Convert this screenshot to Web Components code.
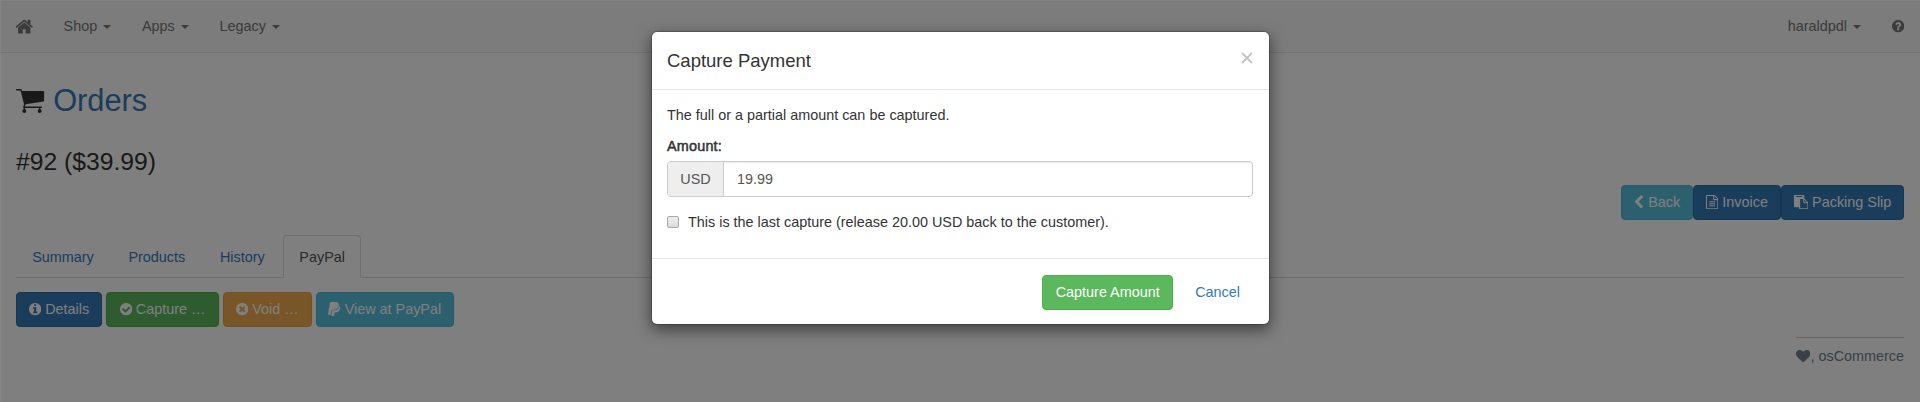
<!DOCTYPE html>
<html lang="en">
<head>
<meta charset="utf-8">
<title>Orders</title>
<style>
html,body{margin:0;height:100%;overflow:hidden;background:#fff}
body{font-family:"Liberation Sans",Arial,sans-serif;font-size:14.4px;line-height:20.6px;color:#333}
</style>
</head>
<body>
<admin-page></admin-page>
<script>
const DISC='q0 209-103 385.5t-279.5 279.5-385.5 103-385.5-103-279.5-279.5-103-385.5 103-385.5 279.5-279.5 385.5-103 385.5 103 279.5 279.5 103 385.5z';
const ICONS={
home:[64,1664,'M1408 992v480q0 26-19 45t-45 19h-384v-384h-256v384h-384q-26 0-45-19t-19-45v-480q0-1 .5-3t.5-3l575-474 575 474q1 2 1 6zm223-69l-62 74q-8 9-21 11h-3q-13 0-21-7l-692-577-692 577q-12 8-24 7-13-2-21-11l-62-74q-8-10-7-23.5t11-21.5l719-599q32-26 76-26t76 26l244 204v-195q0-14 9-23t23-9h192q14 0 23 9t9 23v408l219 182q10 8 11 21.5t-7 23.5z'],
cart:[0,1664,'M40 233H290Q320 233 330 260L352 349H1600Q1635 349 1635 384V920Q1635 950 1600 956L560 1125 520 1250H1480Q1520 1250 1520 1295T1480 1340H440Q400 1340 415 1300L470 1120 265 315H40Q0 315 0 274T40 233zM600 1513a115 115 0 1 1-230 0 115 115 0 1 1 230 0zM1492 1513a115 115 0 1 1-230 0 115 115 0 1 1 230 0zM450 1320h70v100h-70zM1342 1320h70v100h-70z'],
info:[128,1536,'M1152 1376v-160q0-14-9-23t-23-9h-96v-512q0-14-9-23t-23-9h-320q-14 0-23 9t-9 23v160q0 14 9 23t23 9h96v320h-96q-14 0-23 9t-9 23v160q0 14 9 23t23 9h448q14 0 23-9t9-23zm-128-896v-160q0-14-9-23t-23-9h-192q-14 0-23 9t-9 23v160q0 14 9 23t23 9h192q14 0 23-9t9-23zm640 416'+DISC],
check:[128,1536,'M1412 734q0-28-18-46l-91-90q-19-19-45-19t-45 19l-408 407-226-226q-19-19-45-19t-45 19l-91 90q-18 18-18 46 0 27 18 45l362 362q19 19 45 19 27 0 46-19l543-543q18-18 18-45zm252 162'+DISC],
times:[128,1536,'M1277 1122q0-26-19-45l-181-181 181-181q19-19 19-45 0-27-19-46l-90-90q-19-19-46-19-26 0-45 19l-181 181-181-181q-19-19-45-19-27 0-46 19l-90 90q-19 19-19 46 0 26 19 45l181 181-181 181q-19 19-19 45 0 27 19 46l90 90q19 19 46 19 26 0 45-19l181-181 181 181q19 19 45 19 27 0 46-19l90-90q19-19 19-46zm387-226'+DISC],
question:[128,1536,'M1024 1376v-192q0-14-9-23t-23-9h-192q-14 0-23 9t-9 23v192q0 14 9 23t23 9h192q14 0 23-9t9-23zm256-672q0-88-55.5-163t-138.5-116-170-41q-243 0-371 213-15 24 8 42l132 100q7 6 19 6 16 0 25-12 53-68 86-92 34-24 86-24 48 0 85.5 26t37.5 59q0 38-20 61t-68 45q-63 28-115.5 86.5t-52.5 125.5v36q0 14 9 23t23 9h192q14 0 23-9t9-23q0-19 21.5-49.5t54.5-49.5q32-18 49-28.5t46-35 44.5-48 28-60.5 12.5-81zm384 192'+DISC],
heart:[0,1792,'M896 1664q-26 0-44-18l-624-602q-10-8-27.5-26t-55.5-65.5-68-97.5-53.5-121-23.5-138q0-220 127-344t351-124q62 0 126.5 21.5t120 58 95.5 68.5 76 68q36-36 76-68t95.5-68.5 120-58 126.5-21.5q224 0 351 124t127 344q0 221-229 450l-623 600q-18 18-44 18z'],
left:[330,1280,'M1427 301l-531 531 531 531q19 19 19 45t-19 45l-166 166q-19 19-45 19t-45-19l-742-742q-19-19-19-45t19-45l742-742q19-19 45-19t45 19l166 166q19 19 19 45t-19 45z'],
file:[128,1536,'M1596 380q28 28 48 76t20 88v1152q0 40-28 68t-68 28h-1344q-40 0-68-28t-28-68v-1600q0-40 28-68t68-28h896q40 0 88 20t76 48zm-444-244v376h376q-10-29-22-41l-313-313q-12-12-41-22zm384 1528v-1024h-416q-40 0-68-28t-28-68v-416h-768v1536h1280zm-1024-864q0-14 9-23t23-9h704q14 0 23 9t9 23v64q0 14-9 23t-23 9h-704q-14 0-23-9t-9-23v-64zm736 224q14 0 23 9t9 23v64q0 14-9 23t-23 9h-704q-14 0-23-9t-9-23v-64q0-14 9-23t23-9h704zm0 256q14 0 23 9t9 23v64q0 14-9 23t-23 9h-704q-14 0-23-9t-9-23v-64q0-14 9-23t23-9h704z'],
paste:[0,1792,'M768 1664h896v-640h-416q-40 0-68-28t-28-68v-416h-384v1152zm256-1440v-64q0-13-9.5-22.5t-22.5-9.5h-704q-13 0-22.5 9.5t-9.5 22.5v64q0 13 9.5 22.5t22.5 9.5h704q13 0 22.5-9.5t9.5-22.5zm256 672h299l-299-299v299zm512 128v672q0 40-28 68t-68 28h-960q-40 0-68-28t-28-68v-160h-544q-40 0-68-28t-28-68v-1344q0-40 28-68t68-28h1088q40 0 68 28t28 68v328q21 13 36 28l408 408q28 28 48 76t20 88z'],
paypal:[128,1536,'M1647 646q18 84-4 204-87 444-565 444h-44q-25 0-44 16.5t-24 42.5l-4 19-55 346-2 15q-5 26-24.5 42.5t-44.5 16.5h-251q-21 0-33-15t-9-36q9-56 26.5-168t26.5-168 27-167.5 27-167.5q5-37 43-37h131q133 2 236-21 175-39 287-144 102-95 155-246 24-70 35-133 1-6 2.5-7.5t3.5-1 6 3.5q79 59 98 162zm-172-282q0 107-46 236-80 233-302 315-113 40-252 42 0 1-90 1l-90-1q-100 0-118 96-2 8-85 530-1 10-12 10h-295q-22 0-36.5-16.5t-11.5-38.5l232-1471q5-29 27.5-48t51.5-19h598q34 0 97.5 13t111.5 32q107 41 163.5 123t56.5 196z']
};
function define(name,render){
  customElements.define(name,class extends HTMLElement{
    connectedCallback(){
      if(this.shadowRoot)return;
      const t=document.createElement('template');
      t.innerHTML=render(this);
      this.attachShadow({mode:'open'}).append(t.content.cloneNode(true));
    }
  });
}
define('fa-icon',el=>{
  const [x,w,d]=ICONS[el.getAttribute('name')];
  return `<style>:host{display:inline-block;line-height:0;white-space:normal;vertical-align:-.143em}svg{display:block;height:1em;width:${w/1792}em;fill:currentColor}</style><svg viewBox="${x} 0 ${w} 1792"><path d="${d}"/></svg>`;
});
define('nav-link',el=>`<style>
:host{display:flex;align-items:center;padding:0 15.4px;height:51px;color:#777;white-space:nowrap}
i{width:0;height:0;margin-left:6px;border:4.1px solid transparent;border-top-color:currentColor;border-bottom:0;margin-top:1px}
</style><slot></slot>${el.hasAttribute('menu')?'<i></i>':''}`);
define('nav-bar',()=>`<style>
:host{display:flex;justify-content:space-between;height:53px;background:#f8f8f8;border-bottom:1px solid #e7e7e7;box-sizing:border-box;padding:1px .5px 0 .6px}
div{display:flex}
.home{font-size:19.2px;margin-right:-1px}
</style>
<div><nav-link><fa-icon class="home" name="home"></fa-icon></nav-link><nav-link menu>Shop</nav-link><nav-link menu>Apps</nav-link><nav-link menu>Legacy</nav-link></div>
<div><nav-link menu>haraldpdl</nav-link><nav-link><fa-icon name="question"></fa-icon></nav-link></div>`);
define('ui-button',()=>`<style>
:host{display:block;box-sizing:border-box;height:35px;padding:6.2px 0;border:1px solid #2e6da4;border-radius:4px;background:#337ab7;color:#fff;text-align:center;white-space:nowrap}
:host([kind=success]){background:#5cb85c;border-color:#4cae4c}
:host([kind=warning]){background:#f0ad4e;border-color:#eea236}
:host([kind=info]){background:#5bc0de;border-color:#46b8da}
:host([kind=link]){background:none;border-color:transparent;color:#337ab7;padding:6.2px 12px}
</style><slot></slot>`);
define('tab-item',()=>`<style>
:host{display:block;box-sizing:border-box;height:43px;margin-bottom:-1px;padding:11.3px 15.3px 0 15.2px;border:1px solid transparent;border-radius:4px 4px 0 0;color:#337ab7;margin-right:2.2px}
:host([active]){color:#555;border-color:#ddd #ddd #fff;background:#fff;padding-right:14.6px}
</style><slot></slot>`);
define('order-view',()=>`<style>
:host{display:flex;flex-direction:column;padding:0 16px 0 16px}
h1,h2{margin:0;font-weight:400}
h1{font-size:30.8px;line-height:34px;height:34px;margin-top:31px;color:#337ab7;white-space:nowrap}
h1 fa-icon{color:#333}
h2{font-size:24.7px;line-height:28px;margin-top:30px;color:#333}
.actions{display:flex;justify-content:flex-end;margin-top:9px}
.tabs{display:flex;border-bottom:1px solid #ddd;margin-top:15px}
.buttons{display:flex;gap:4px;margin-top:14px}
footer{align-self:flex-end;margin-top:10px;padding-top:8px;border-top:1px solid #ccc;color:#708090;white-space:nowrap}
</style>
<h1><fa-icon name="cart"></fa-icon> Orders</h1>
<h2>#92 ($39.99)</h2>
<div class="actions"><ui-button kind="info" style="width:72px"><fa-icon name="left"></fa-icon> Back</ui-button><ui-button style="width:88px"><fa-icon name="file"></fa-icon> Invoice</ui-button><ui-button style="width:123px"><fa-icon name="paste"></fa-icon> Packing Slip</ui-button></div>
<div class="tabs"><tab-item>Summary</tab-item><tab-item>Products</tab-item><tab-item>History</tab-item><tab-item active>PayPal</tab-item></div>
<div class="buttons"><ui-button style="width:86px"><fa-icon name="info"></fa-icon> Details</ui-button><ui-button kind="success" style="width:113px"><fa-icon name="check"></fa-icon> Capture …</ui-button><ui-button kind="warning" style="width:88.5px"><fa-icon name="times"></fa-icon> Void …</ui-button><ui-button kind="info" style="width:138.5px"><fa-icon name="paypal"></fa-icon> View at PayPal</ui-button></div>
<footer><fa-icon name="heart"></fa-icon>, osCommerce</footer>`);
define('amount-field',()=>`<style>
:host{display:flex;box-sizing:border-box;height:36px;border:1px solid #ccc;border-radius:4px;overflow:hidden;color:#555;line-height:34px;box-shadow:inset 0 1px 1px rgba(0,0,0,.075)}
.unit{width:55px;text-align:center;background:#eee;border-right:1px solid #ccc}
.value{padding-left:13px}
</style><div class="unit">USD</div><div class="value"><slot></slot></div>`);
define('capture-dialog',()=>`<style>
:host{display:block;box-sizing:border-box;width:619px;height:294px;background:#fff;background-clip:padding-box;border:1px solid rgba(0,0,0,.2);border-radius:6px;box-shadow:0 5px 15px rgba(0,0,0,.5);color:#333}
header{display:flex;justify-content:space-between;height:58px;box-sizing:border-box;border-bottom:1px solid #e5e5e5;padding:16px 16px 0 15px;font-size:18.5px;line-height:26px}
header svg{width:12px;height:12px;margin-top:4px;stroke:#c4c4c4;stroke-width:1.9}
main{padding:15px 16px 15px 15px;height:169px;box-sizing:border-box;border-bottom:1px solid #e5e5e5}
p{margin:0 0 10px}
.label{font-weight:400;-webkit-text-stroke:.5px #333;letter-spacing:.2px;margin-bottom:5px}
.check{display:flex;align-items:center;margin-top:15px;gap:9px}
.box{width:12px;height:12px;box-sizing:border-box;border:1px solid #a8a8a8;border-radius:2px;background:linear-gradient(#eee,#dcdcdc)}
footer{display:flex;justify-content:flex-end;padding:15.6px 16px 0;gap:9px}
</style>
<header><span>Capture Payment</span><svg viewBox="0 0 12 12"><path d="M1 1L11 11M11 1L1 11"/></svg></header>
<main><p>The full or a partial amount can be captured.</p><div class="label">Amount:</div>
<amount-field>19.99</amount-field>
<div class="check"><span class="box"></span><span>This is the last capture (release 20.00 USD back to the customer).</span></div></main>
<footer><ui-button kind="success" style="width:131px">Capture Amount</ui-button><ui-button kind="link">Cancel</ui-button></footer>`);
define('admin-page',()=>`<style>
:host{display:block;position:relative;height:402px;overflow:hidden}
.backdrop{position:absolute;inset:0;box-sizing:border-box;display:flex;justify-content:center;align-items:flex-start;padding-top:30px;background:rgba(0,0,0,.5);background-clip:padding-box;border:solid rgba(0,0,0,.47);border-width:1px 0 0 1px}
</style><nav-bar></nav-bar><order-view></order-view><div class="backdrop"><capture-dialog></capture-dialog></div>`);
</script>
</body>
</html>
